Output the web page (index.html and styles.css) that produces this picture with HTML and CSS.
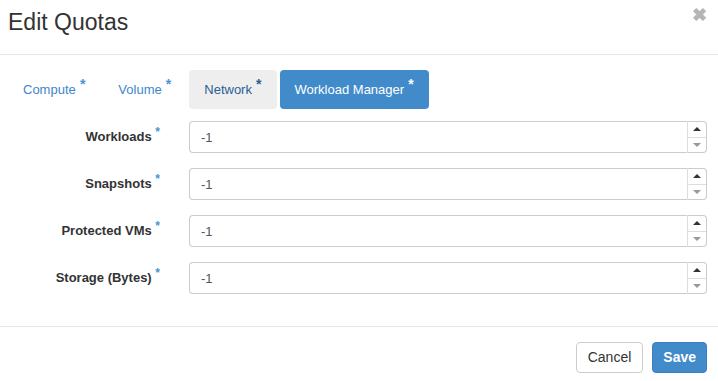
FILE: index.html
```html
<!DOCTYPE html>
<html lang="en">
<head>
    <meta charset="UTF-8">
    <title>Edit Quotas</title>
    <link rel="stylesheet" href="styles.css">
</head>
<body>
    <div class="modal">
        <div class="modal-header">
            <h3 class="modal-title">Edit Quotas</h3>
            <span class="close">&#x2716;</span>
        </div>

        <div class="modal-body">
            <ul class="tabs">
                <li><a href="#">Compute <span class="req">*</span></a></li>
                <li><a href="#">Volume <span class="req">*</span></a></li>
                <li class="hover"><a href="#">Network <span class="req">*</span></a></li>
                <li class="active"><a href="#">Workload Manager <span class="req">*</span></a></li>
            </ul>

            <form class="quota-form">
                <div class="form-row">
                    <label for="workloads">Workloads <span class="req">*</span></label>
                    <div class="spinner">
                        <input type="text" id="workloads" value="-1">
                        <div class="spin-btns">
                            <span class="spin up"></span>
                            <span class="spin down"></span>
                        </div>
                    </div>
                </div>
                <div class="form-row">
                    <label for="snapshots">Snapshots <span class="req">*</span></label>
                    <div class="spinner">
                        <input type="text" id="snapshots" value="-1">
                        <div class="spin-btns">
                            <span class="spin up"></span>
                            <span class="spin down"></span>
                        </div>
                    </div>
                </div>
                <div class="form-row">
                    <label for="protectedVms">Protected VMs <span class="req">*</span></label>
                    <div class="spinner">
                        <input type="text" id="protectedVms" value="-1">
                        <div class="spin-btns">
                            <span class="spin up"></span>
                            <span class="spin down"></span>
                        </div>
                    </div>
                </div>
                <div class="form-row">
                    <label for="storage">Storage (Bytes) <span class="req">*</span></label>
                    <div class="spinner">
                        <input type="text" id="storage" value="-1">
                        <div class="spin-btns">
                            <span class="spin up"></span>
                            <span class="spin down"></span>
                        </div>
                    </div>
                </div>
            </form>
        </div>

        <div class="modal-footer">
            <button type="button" class="btn">Cancel</button>
            <button type="button" class="btn btn-primary">Save</button>
        </div>
    </div>
</body>
</html>
```

FILE: styles.css
```css
body {
    font-family: "Liberation Sans", Arial, sans-serif;
    font-size: 13px;
    color: #333;
    background: #fff;
    margin: 0;
    padding: 0;
}
.modal {
    width: 718px;
    height: 381px;
    display: flex;
    flex-direction: column;
}
.modal-header {
    height: 54px;
    border-bottom: 1px solid #e5e5e5;
    display: flex;
    justify-content: space-between;
    align-items: flex-start;
    padding: 0 11px 0 8px;
}
.modal-title {
    margin: 0;
    padding-top: 8px;
    font-size: 23px;
    font-weight: normal;
    line-height: 28px;
    color: #333;
}
.close {
    color: #b5b5b5;
    font-size: 18px;
    font-weight: bold;
    padding-top: 4px;
}
.modal-body {
    padding: 15px 11px 0 8px;
    flex: 1;
}
.tabs {
    list-style: none;
    margin: 0 0 12px;
    padding: 0;
    display: flex;
    gap: 3px;
}
.tabs a {
    display: block;
    padding: 10px 15px;
    line-height: 19px;
    border-radius: 4px;
    color: #3d86cc;
    text-decoration: none;
}
.tabs .req {
    font-size: 14px;
    padding-left: 0.5px;
}
.tabs li.hover a {
    background: #eee;
    color: #2a5f96;
}
.tabs li.active a {
    background: #428bca;
    color: #fff;
}
.req {
    font-weight: bold;
    font-size: 12px;
    position: relative;
    top: -5px;
    color: #4b94d6;
}
.tabs li.hover .req {
    color: #2a5f96;
}
.tabs li.active .req {
    color: #fff;
}
.quota-form {
    display: flex;
    flex-direction: column;
    gap: 15px;
}
.form-row {
    display: grid;
    grid-template-columns: 152px 1fr;
    column-gap: 29px;
    align-items: center;
}
.form-row label {
    text-align: right;
    font-weight: bold;
    padding-bottom: 2px;
}
.spinner {
    display: flex;
    height: 32px;
}
.spinner input {
    flex: 1;
    height: 30px;
    margin: 0;
    padding: 0 11px;
    border: 1px solid #ccc;
    border-right: none;
    border-radius: 4px 0 0 4px;
    font-family: inherit;
    font-size: 13px;
    color: #555;
    box-sizing: content-box;
}
.spin-btns {
    width: 18px;
    display: flex;
    flex-direction: column;
    border: 1px solid #ccc;
    border-left: 1px solid #ddd;
    border-radius: 0 4px 4px 0;
}
.spin {
    flex: 1;
    display: flex;
    align-items: center;
    justify-content: center;
}
.spin.up {
    border-bottom: 1px solid #ddd;
}
.spin::before {
    content: "";
    border-left: 4px solid transparent;
    border-right: 4px solid transparent;
}
.spin.up::before {
    border-bottom: 4px solid #333;
}
.spin.down::before {
    border-top: 4px solid #999;
}
.modal-footer {
    border-top: 1px solid #e5e5e5;
    padding: 15px 11px 8px;
    display: flex;
    justify-content: flex-end;
    gap: 9px;
}
.btn {
    font-family: inherit;
    font-size: 14px;
    line-height: 19px;
    padding: 5px 11px;
    border: 1px solid #ccc;
    border-radius: 4px;
    background: #fff;
    color: #333;
}
.btn-primary {
    background: #428bca;
    border-color: #3a7fbe;
    color: #fff;
    font-weight: bold;
    padding: 5px 10px;
}
```
